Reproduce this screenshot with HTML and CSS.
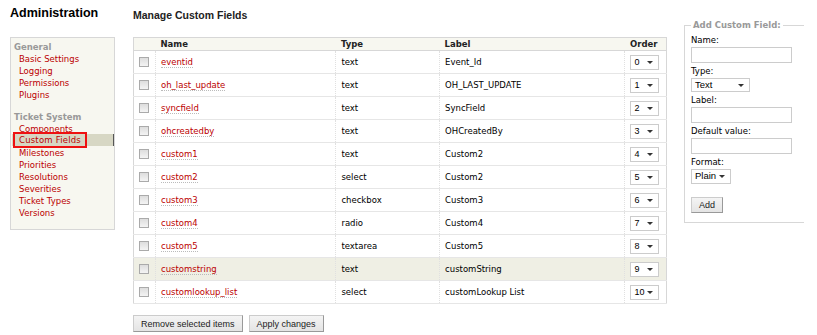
FILE: index.html
```html
<!DOCTYPE html>
<html lang="en">
<head>
  <meta charset="UTF-8" />
  <title>Administration - Custom Fields</title>
  <link rel="stylesheet" href="styles.css">
</head>
<body>
  <div class="page">
    <div class="sidebar">
      <h1>Administration</h1>
      <div class="tabs">
        <div class="group">
          <p class="group-title">General</p>
          <a href="#">Basic Settings</a>
          <a href="#">Logging</a>
          <a href="#">Permissions</a>
          <a href="#">Plugins</a>
        </div>
        <div class="group">
          <p class="group-title">Ticket System</p>
          <a href="#">Components</a>
          <a href="#" class="active"><span class="mark">Custom Fields</span></a>
          <a href="#">Milestones</a>
          <a href="#">Priorities</a>
          <a href="#">Resolutions</a>
          <a href="#">Severities</a>
          <a href="#">Ticket Types</a>
          <a href="#">Versions</a>
        </div>
      </div>
    </div>

    <div class="content">
      <h2>Manage Custom Fields</h2>
      <table class="listing">
        <thead>
          <tr>
            <th class="sel"></th>
            <th class="col-name">Name</th>
            <th class="col-type">Type</th>
            <th class="col-label">Label</th>
            <th class="col-order">Order</th>
          </tr>
        </thead>
        <tbody>
          <tr><td class="sel"><input type="checkbox" /></td><td><a href="#">eventid</a></td><td>text</td><td>Event_Id</td><td class="order"><span class="pick">0</span></td></tr>
          <tr><td class="sel"><input type="checkbox" /></td><td><a href="#">oh_last_update</a></td><td>text</td><td>OH_LAST_UPDATE</td><td class="order"><span class="pick">1</span></td></tr>
          <tr><td class="sel"><input type="checkbox" /></td><td><a href="#">syncfield</a></td><td>text</td><td>SyncField</td><td class="order"><span class="pick">2</span></td></tr>
          <tr><td class="sel"><input type="checkbox" /></td><td><a href="#">ohcreatedby</a></td><td>text</td><td>OHCreatedBy</td><td class="order"><span class="pick">3</span></td></tr>
          <tr><td class="sel"><input type="checkbox" /></td><td><a href="#">custom1</a></td><td>text</td><td>Custom2</td><td class="order"><span class="pick">4</span></td></tr>
          <tr><td class="sel"><input type="checkbox" /></td><td><a href="#">custom2</a></td><td>select</td><td>Custom2</td><td class="order"><span class="pick">5</span></td></tr>
          <tr><td class="sel"><input type="checkbox" /></td><td><a href="#">custom3</a></td><td>checkbox</td><td>Custom3</td><td class="order"><span class="pick">6</span></td></tr>
          <tr><td class="sel"><input type="checkbox" /></td><td><a href="#">custom4</a></td><td>radio</td><td>Custom4</td><td class="order"><span class="pick">7</span></td></tr>
          <tr><td class="sel"><input type="checkbox" /></td><td><a href="#">custom5</a></td><td>textarea</td><td>Custom5</td><td class="order"><span class="pick">8</span></td></tr>
          <tr class="hover"><td class="sel"><input type="checkbox" /></td><td><a href="#">customstring</a></td><td>text</td><td>customString</td><td class="order"><span class="pick">9</span></td></tr>
          <tr><td class="sel"><input type="checkbox" /></td><td><a href="#">customlookup_list</a></td><td>select</td><td>customLookup List</td><td class="order"><span class="pick">10</span></td></tr>
        </tbody>
      </table>
      <div class="buttons">
        <button>Remove selected items</button>
        <button>Apply changes</button>
      </div>
    </div>

    <fieldset class="addfield">
      <legend>Add Custom Field:</legend>
      <label>Name:</label>
      <input type="text" class="field" />
      <label>Type:</label>
      <span class="drop wide">Text</span>
      <label>Label:</label>
      <input type="text" class="field" />
      <label>Default value:</label>
      <input type="text" class="field" />
      <label>Format:</label>
      <span class="drop">Plain</span>
      <button class="add">Add</button>
    </fieldset>
  </div>
</body>
</html>
```

FILE: styles.css
```css
body {
  margin: 0;
  background: #fff;
  color: #000;
  font-family: "DejaVu Sans", Verdana, sans-serif;
  font-size: 8.5px;
}

a {
  color: #b00;
  text-decoration: none;
}

.page {
  display: flex;
  align-items: flex-start;
  padding-left: 10px;
}

/* left navigation */
.sidebar {
  width: 105px;
}

h1 {
  font-family: "Liberation Sans", Arial, sans-serif;
  font-size: 12.5px;
  font-weight: bold;
  margin: 6px 0 17px 0;
  line-height: 14px;
}

.tabs {
  background: #f7f7f0;
  border: 1px solid #d7d7d7;
  padding: 3px 0 10px 0;
}

.group {
  margin-bottom: 10px;
}

.group:last-child {
  margin-bottom: 0;
}

.group-title {
  margin: 0 0 0 3px;
  color: #999;
  font-weight: bold;
  line-height: 12px;
}

.tabs a {
  display: block;
  line-height: 12px;
  padding-left: 8px;
}

.tabs a.active {
  background: #d7d7c4;
  border-right: 1px solid #555;
  margin: -1px 0 1px 1px;
  padding-left: 7px;
}

.mark {
  display: inline-block;
  outline: 2px solid #e11;
  margin-left: -4px;
  padding: 0 4px 0 4px;
  line-height: 12px;
  letter-spacing: 0.2px;
}

/* main listing */
.content {
  margin-left: 18px;
}

h2 {
  font-family: "Liberation Sans", Arial, sans-serif;
  font-size: 10.5px;
  font-weight: bold;
  color: #222;
  margin: 9px 0 16px 0;
  line-height: 12px;
}

.listing {
  width: 534px;
  border-collapse: collapse;
  border: 1px solid #d7d7d7;
}

.listing th {
  background: #f7f7f0;
  border-bottom: 1px solid #d7d7d7;
  text-align: left;
  font-weight: bold;
  color: #222;
  height: 12px;
  padding: 0 5px;
  line-height: 12px;
}

.listing td {
  height: 22px;
  padding: 0 5px;
  border-bottom: 1px solid #e6e6e6;
  border-left: 1px dotted #e0e0e0;
  vertical-align: middle;
}

.listing tr.hover td {
  background: #efefe4;
}

.listing td a {
  border-bottom: 1px dotted #bbb;
}

.listing .sel {
  width: 12px;
  padding: 0 4px 0 5px;
}

.listing td.sel {
  border-left: none;
}

.col-name {
  width: 171px;
}

.col-type {
  width: 94px;
}

.col-label {
  width: 176px;
}

.col-order {
  width: 31px;
}

input[type="checkbox"] {
  appearance: none;
  width: 10px;
  height: 10px;
  margin: 0;
  display: block;
  border: 1px solid #aaa;
  background: linear-gradient(#ddd, #f4f4f4);
}

.listing td.order {
  padding-left: 5px;
}

.pick,
.drop {
  display: inline-block;
  position: relative;
  box-sizing: border-box;
  width: 29px;
  height: 15px;
  line-height: 13px;
  padding-left: 3px;
  border: 1px solid #ccc;
  background: #fff;
  font-family: "Liberation Sans", Arial, sans-serif;
  font-size: 9px;
}

.pick::after,
.drop::after {
  content: "";
  position: absolute;
  right: 5px;
  top: 5px;
  border-left: 3px solid transparent;
  border-right: 3px solid transparent;
  border-top: 3px solid #333;
}

.buttons {
  margin-top: 11px;
  display: flex;
  gap: 6px;
}

button {
  font-family: "Liberation Sans", Arial, sans-serif;
  font-size: 9px;
  height: 17px;
  padding: 0 7px;
  background: linear-gradient(#f4f4f4, #e4e4e4);
  border: 1px solid #ccc;
  border-right-color: #999;
  border-bottom-color: #999;
  color: #222;
}

/* add form */
.addfield {
  margin: 20px 0 0 17px;
  width: 107px;
  padding: 2px 6px 9px 6px;
  border: 1px solid #d7d7d7;
  border-right: none;
  display: flex;
  flex-direction: column;
  align-items: flex-start;
}

.addfield legend {
  color: #999;
  font-weight: bold;
  padding: 0 2px;
  margin-left: 0;
}

.addfield label {
  line-height: 12px;
  margin-top: 1px;
}

.addfield label:first-of-type {
  margin-top: 2px;
}

.field {
  box-sizing: border-box;
  width: 101px;
  height: 16px;
  border: 1px solid #ccc;
  margin: 1px 0 1px 0;
}

.drop {
  margin: 1px 0 1px 0;
  width: 40px;
  height: 14px;
  line-height: 12px;
  padding-left: 3px;
  font-size: 9.5px;
}

.drop.wide {
  width: 59px;
}

.addfield .drop:last-of-type {
  height: 15px;
}

.add {
  margin-top: 12px;
  padding: 0 7px;
  height: 16px;
}
```
